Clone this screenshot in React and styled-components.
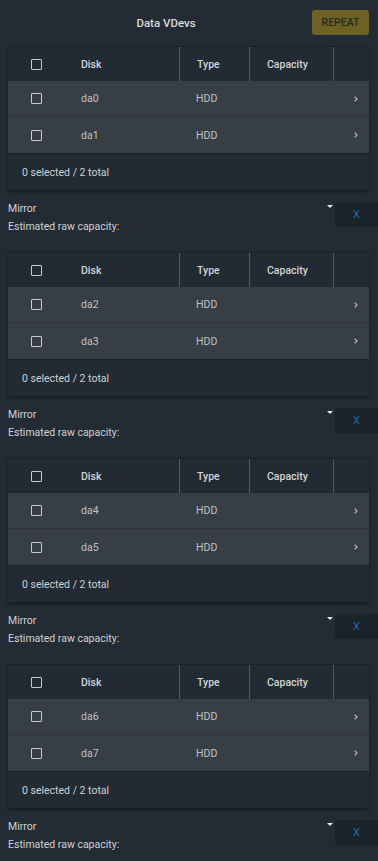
import React from "react";
import styled, { createGlobalStyle } from "styled-components";

const Global = createGlobalStyle`
  html, body { margin: 0; padding: 0; background: #232c35; }
  body { font-family: Roboto, "Liberation Sans", sans-serif; overflow: hidden; }
  * { box-sizing: border-box; }
`;

const Page = styled.div`
  width: 378px;
  min-height: 861px;
  background: #232c35;
  padding-left: 8px;
  color: #d4d6d8;
`;

const TopBar = styled.div`
  display: flex;
  align-items: center;
  height: 46px;
  padding-right: 9px;
`;

const Title = styled.div`
  flex: 1;
  text-align: center;
  padding-left: 12px;
  font-size: 11.5px;
  font-weight: 500;
  color: #d8d9da;
`;

const RepeatButton = styled.button`
  width: 57px;
  height: 25px;
  border: none;
  border-radius: 3px;
  background: #6d6224;
  color: #28291f;
  font-family: Roboto, "Liberation Sans", sans-serif;
  font-size: 10.5px;
  font-weight: 500;
  padding: 0;
  margin-top: -1px;
`;

const Card = styled.div`
  width: 361px;
  background: #222b33;
  border-top: 1px solid #1a2127;
  box-shadow: 0 2px 4px rgba(0, 0, 0, 0.45);
`;

const Grid = styled.div`
  display: grid;
  grid-template-columns: 56px 115px 70px 84px 36px;
  align-items: center;
  height: ${(p) => p.$h}px;
  background: ${(p) => p.$bg};
  border-bottom: ${(p) => (p.$line ? "1px solid rgba(0,0,0,0.12)" : "none")};
`;

const Cell = styled.div`
  height: 100%;
  display: flex;
  align-items: center;
  padding-left: ${(p) => (p.$check ? 23 : 17)}px;
  font-size: 10.5px;
  font-weight: ${(p) => (p.$head ? 500 : 400)};
  color: ${(p) => (p.$head ? "#d2d4d6" : "#bfc2c5")};
  border-left: ${(p) => (p.$divider ? "1px solid rgba(255,255,255,0.22)" : "none")};
  justify-content: ${(p) => (p.$end ? "flex-end" : "flex-start")};
  padding-right: ${(p) => (p.$end ? 11 : 0)}px;
`;

const Checkbox = styled.span`
  width: 11px;
  height: 11px;
  border: 1.5px solid #c9cbcd;
  border-radius: 1px;
  display: inline-block;
`;

const Footer = styled.div`
  height: 37px;
  display: flex;
  align-items: center;
  padding-left: 14px;
  font-size: 10.5px;
  color: #cfd1d3;
  border-top: 1px solid #1b2229;
`;

const Controls = styled.div`
  display: flex;
  align-items: flex-start;
  height: 62px;
`;

const ControlText = styled.div`
  flex: 1;
  padding-top: 10px;
`;

const SelectRow = styled.div`
  display: flex;
  align-items: center;
  justify-content: space-between;
  height: 17px;
  font-size: 10.5px;
  color: #cfd1d3;
  padding-right: 2px;
`;

const Caret = styled.span`
  width: 0;
  height: 0;
  border-left: 3.5px solid transparent;
  border-right: 3.5px solid transparent;
  border-top: 3.5px solid #e6e6e6;
  margin-top: -4px;
`;

const Estimated = styled.div`
  font-size: 10.5px;
  line-height: 17px;
  margin-top: 1px;
  color: #cfd1d3;
`;

const RemoveButton = styled.button`
  width: 43px;
  height: 25px;
  margin-top: 12px;
  border: none;
  border-radius: 3px 0 0 3px;
  background: #1a232a;
  color: #1f6aa3;
  font-family: Roboto, "Liberation Sans", sans-serif;
  font-size: 11px;
  padding: 0;
`;

const Chevron = () => (
  <svg width="4" height="6" viewBox="0 0 4 6">
    <polyline points="0.7,0.7 3,3 0.7,5.3" fill="none" stroke="#b9bcbf" strokeWidth="1.2" />
  </svg>
);

function Vdev({ disks }) {
  return (
    <>
      <Card>
        <Grid $h={34}>
          <Cell $check $head>
            <Checkbox />
          </Cell>
          <Cell $head>Disk</Cell>
          <Cell $head $divider>Type</Cell>
          <Cell $head $divider>Capacity</Cell>
          <Cell $head $divider />
        </Grid>
        {disks.map((d, i) => (
          <Grid key={d} $h={36} $bg="#373e45" $line={i === 0}>
            <Cell $check>
              <Checkbox />
            </Cell>
            <Cell>{d}</Cell>
            <Cell>HDD</Cell>
            <Cell />
            <Cell $end>
              <Chevron />
            </Cell>
          </Grid>
        ))}
        <Footer>0 selected / {disks.length} total</Footer>
      </Card>
      <Controls>
        <ControlText>
          <SelectRow>
            <span>Mirror</span>
            <Caret />
          </SelectRow>
          <Estimated>Estimated raw capacity:</Estimated>
        </ControlText>
        <RemoveButton>X</RemoveButton>
      </Controls>
    </>
  );
}

export default function App() {
  const groups = [
    ["da0", "da1"],
    ["da2", "da3"],
    ["da4", "da5"],
    ["da6", "da7"],
  ];
  return (
    <Page>
      <Global />
      <TopBar>
        <Title>Data VDevs</Title>
        <RepeatButton>REPEAT</RepeatButton>
      </TopBar>
      {groups.map((g) => (
        <Vdev key={g[0]} disks={g} />
      ))}
    </Page>
  );
}
